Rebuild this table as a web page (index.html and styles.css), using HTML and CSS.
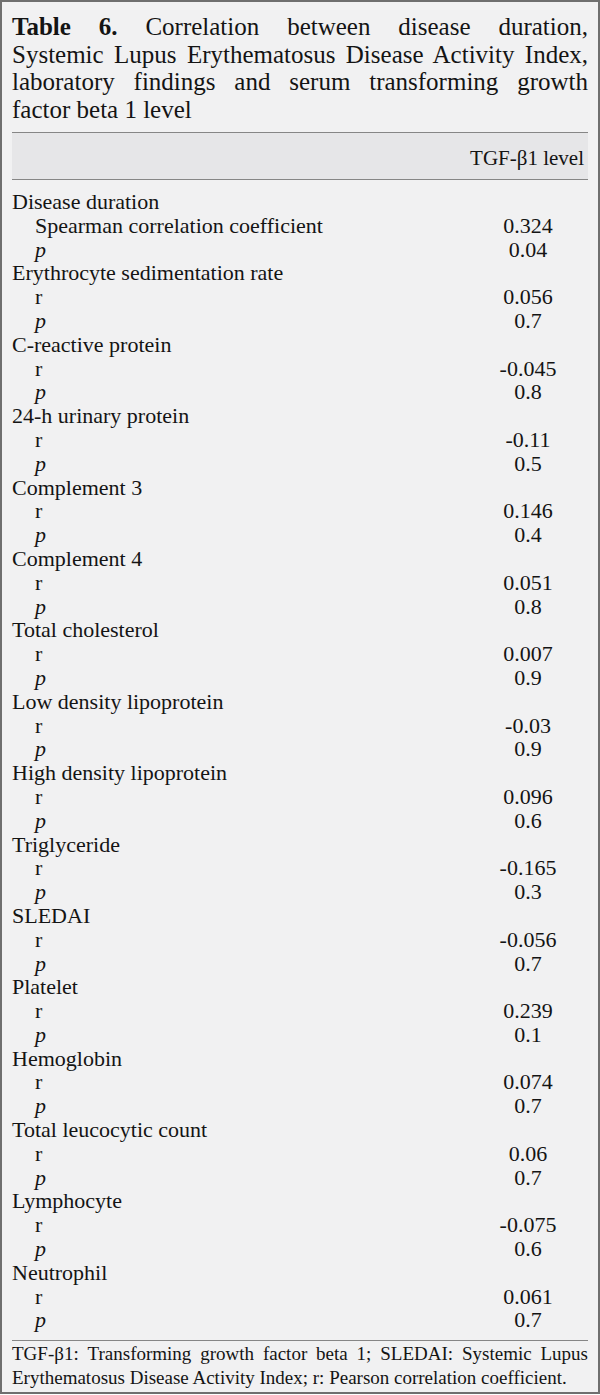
FILE: index.html
```html
<!DOCTYPE html>
<html>
<head>
<meta charset="utf-8">
<link rel="stylesheet" href="styles.css">
</head>
<body>
<div class="frame">
  <div class="caption">
    <span class="cline"><b>Table 6.</b> Correlation between disease duration,</span>
    <span class="cline">Systemic Lupus Erythematosus Disease Activity Index,</span>
    <span class="cline">laboratory findings and serum transforming growth</span>
    <span class="cline last">factor beta 1 level</span>
  </div>
  <table class="data">
    <thead>
      <tr><th class="lab"></th><th class="val">TGF-β1 level</th></tr>
    </thead>
    <tbody>
      <tr class="first"><td class="grp">Disease duration</td><td></td></tr>
      <tr><td class="sub">Spearman correlation coefficient</td><td class="num">0.324</td></tr>
      <tr><td class="sub"><i>p</i></td><td class="num">0.04</td></tr>
      <tr><td class="grp">Erythrocyte sedimentation rate</td><td></td></tr>
      <tr><td class="sub">r</td><td class="num">0.056</td></tr>
      <tr><td class="sub"><i>p</i></td><td class="num">0.7</td></tr>
      <tr><td class="grp">C-reactive protein</td><td></td></tr>
      <tr><td class="sub">r</td><td class="num">-0.045</td></tr>
      <tr><td class="sub"><i>p</i></td><td class="num">0.8</td></tr>
      <tr><td class="grp">24-h urinary protein</td><td></td></tr>
      <tr><td class="sub">r</td><td class="num">-0.11</td></tr>
      <tr><td class="sub"><i>p</i></td><td class="num">0.5</td></tr>
      <tr><td class="grp">Complement 3</td><td></td></tr>
      <tr><td class="sub">r</td><td class="num">0.146</td></tr>
      <tr><td class="sub"><i>p</i></td><td class="num">0.4</td></tr>
      <tr><td class="grp">Complement 4</td><td></td></tr>
      <tr><td class="sub">r</td><td class="num">0.051</td></tr>
      <tr><td class="sub"><i>p</i></td><td class="num">0.8</td></tr>
      <tr><td class="grp">Total cholesterol</td><td></td></tr>
      <tr><td class="sub">r</td><td class="num">0.007</td></tr>
      <tr><td class="sub"><i>p</i></td><td class="num">0.9</td></tr>
      <tr><td class="grp">Low density lipoprotein</td><td></td></tr>
      <tr><td class="sub">r</td><td class="num">-0.03</td></tr>
      <tr><td class="sub"><i>p</i></td><td class="num">0.9</td></tr>
      <tr><td class="grp">High density lipoprotein</td><td></td></tr>
      <tr><td class="sub">r</td><td class="num">0.096</td></tr>
      <tr><td class="sub"><i>p</i></td><td class="num">0.6</td></tr>
      <tr><td class="grp">Triglyceride</td><td></td></tr>
      <tr><td class="sub">r</td><td class="num">-0.165</td></tr>
      <tr><td class="sub"><i>p</i></td><td class="num">0.3</td></tr>
      <tr><td class="grp">SLEDAI</td><td></td></tr>
      <tr><td class="sub">r</td><td class="num">-0.056</td></tr>
      <tr><td class="sub"><i>p</i></td><td class="num">0.7</td></tr>
      <tr><td class="grp">Platelet</td><td></td></tr>
      <tr><td class="sub">r</td><td class="num">0.239</td></tr>
      <tr><td class="sub"><i>p</i></td><td class="num">0.1</td></tr>
      <tr><td class="grp">Hemoglobin</td><td></td></tr>
      <tr><td class="sub">r</td><td class="num">0.074</td></tr>
      <tr><td class="sub"><i>p</i></td><td class="num">0.7</td></tr>
      <tr><td class="grp">Total leucocytic count</td><td></td></tr>
      <tr><td class="sub">r</td><td class="num">0.06</td></tr>
      <tr><td class="sub"><i>p</i></td><td class="num">0.7</td></tr>
      <tr><td class="grp">Lymphocyte</td><td></td></tr>
      <tr><td class="sub">r</td><td class="num">-0.075</td></tr>
      <tr><td class="sub"><i>p</i></td><td class="num">0.6</td></tr>
      <tr><td class="grp">Neutrophil</td><td></td></tr>
      <tr><td class="sub">r</td><td class="num">0.061</td></tr>
      <tr class="lastrow"><td class="sub"><i>p</i></td><td class="num">0.7</td></tr>
    </tbody>
  </table>
  <div class="note">
    <span class="nline">TGF-β1: Transforming growth factor beta 1; SLEDAI: Systemic Lupus</span>
    <span class="nline last">Erythematosus Disease Activity Index; r: Pearson correlation coefficient.</span>
  </div>
</div>
</body>
</html>
```
FILE: styles.css
```css
html, body {
  margin: 0;
  padding: 0;
  background: #ffffff;
}

.frame {
  width: 600px;
  box-sizing: border-box;
  border: 2px solid #6f6f6f;
  background: #f1f1f2;
  padding: 11px 10px 2px 10px;
  font-family: "Liberation Serif", "Times New Roman", serif;
  color: #141414;
}

.caption {
  font-size: 25px;
  line-height: 27.5px;
}

.cline {
  display: block;
  white-space: nowrap;
  text-align: justify;
  text-align-last: justify;
}

.cline.last {
  text-align-last: left;
}

.caption b {
  font-weight: bold;
}

.data {
  width: 100%;
  border-collapse: collapse;
  margin-top: 9px;
}

.data thead th {
  background: #e6e6e8;
  border-top: 1px solid #868686;
  border-bottom: 1px solid #868686;
  font-weight: normal;
  font-size: 21px;
  line-height: 24px;
  padding: 13px 4px 9px 0;
}

.data th.val {
  text-align: right;
  width: 116px;
}

.data td {
  padding: 0;
  font-size: 22px;
  line-height: 23.8px;
  height: 23.8px;
}

.data tr.first td {
  padding-top: 10px;
}

.data tr.lastrow td {
  padding-bottom: 8px;
  border-bottom: 1px solid #868686;
}

.grp {
  padding-left: 0;
}

.data td.sub {
  padding-left: 23px;
}

.data td.num {
  text-align: center;
}

.note {
  font-size: 19px;
  line-height: 24px;
  padding-top: 1px;
}

.nline {
  display: block;
  white-space: nowrap;
  text-align: justify;
  text-align-last: justify;
}

.nline.last {
  text-align-last: left;
}
```
